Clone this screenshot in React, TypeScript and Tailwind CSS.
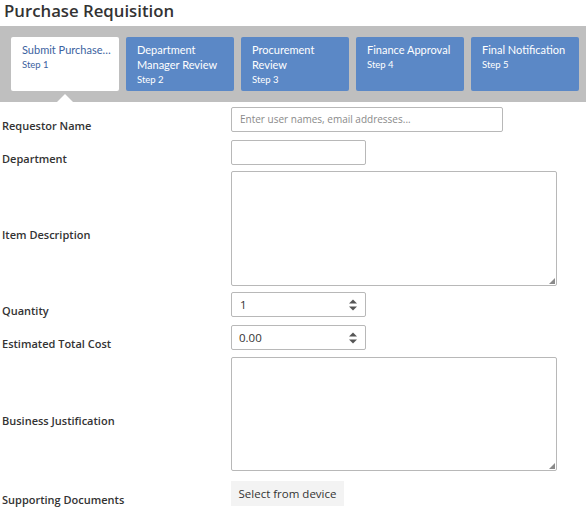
import React from "react";

const font = { fontFamily: '"Segoe UI", "Open Sans", "Noto Sans", sans-serif' };
const cardFont = { fontFamily: 'Lato, "Open Sans", sans-serif' };

type Step = { title: string; step: string; active?: boolean };

const steps: Step[] = [
  { title: "Submit Purchase Requisition", step: "Step 1", active: true },
  { title: "Department Manager Review", step: "Step 2" },
  { title: "Procurement Review", step: "Step 3" },
  { title: "Finance Approval", step: "Step 4" },
  { title: "Final Notification", step: "Step 5" },
];

function StepCard({ s }: { s: Step }) {
  if (s.active) {
    return (
      <div className="w-[108px] h-[54px] shrink-0 bg-white rounded-[2px] pl-[11px] pr-[8px] pt-[5px]" style={cardFont}>
        <div className="truncate text-[11px] leading-[15px] text-[#3b62a0]">Submit Purchase Requisition</div>
        <div className="text-[9.5px] leading-[16px] text-[#3b62a0]">{s.step}</div>
      </div>
    );
  }
  return (
    <div className="w-[108px] h-[54px] shrink-0 bg-[#5b88c6] rounded-[2px] pl-[11px] pr-[6px] pt-[5px] text-white" style={cardFont}>
      <div className="text-[11px] leading-[15px]">{s.title}</div>
      <div className="text-[9.5px] leading-[16px]">{s.step}</div>
    </div>
  );
}

function Label({ children }: { children: React.ReactNode }) {
  return (
    <div className="w-[231px] shrink-0 pl-[2px] text-[11px] font-semibold text-[#333] translate-y-[7px]">
      {children}
    </div>
  );
}

function Spinner() {
  return (
    <div className="absolute right-[8px] top-1/2 -translate-y-1/2 flex flex-col gap-[3px]">
      <div className="w-0 h-0 border-l-[4px] border-r-[4px] border-b-[4px] border-l-transparent border-r-transparent border-b-[#555]" />
      <div className="w-0 h-0 border-l-[4px] border-r-[4px] border-t-[4px] border-l-transparent border-r-transparent border-t-[#555]" />
    </div>
  );
}

function Grip() {
  return (
    <div className="absolute right-[1px] bottom-[1px] w-0 h-0 border-l-[6px] border-b-[6px] border-l-transparent border-b-[#8a8a8a]" />
  );
}

export default function App() {
  return (
    <div className="w-[586px] h-[515px] bg-white overflow-hidden" style={font}>
      <div className="h-[26px] pl-[4px] text-[16.75px] leading-[22px] font-semibold text-[#333]">Purchase Requisition</div>
      <div className="relative h-[76px] bg-[#bfbfbf] px-[11px] pt-[11px] flex gap-[7px]">
        {steps.map((s) => (
          <StepCard key={s.step} s={s} />
        ))}
        <div className="absolute left-[57px] bottom-0 w-0 h-0 border-l-[8px] border-r-[8px] border-b-[8px] border-l-transparent border-r-transparent border-b-white" />
      </div>

      <div className="flex flex-col pt-[5px]">
        <div className="flex items-center h-[25px]">
          <Label>Requestor Name</Label>
          <div className="w-[272px] h-[25px] border border-[#b8b8b8] rounded-[2px] px-[8px] flex items-center text-[10px] text-[#8a8a8a]">
            Enter user names, email addresses...
          </div>
        </div>

        <div className="flex items-center h-[25px] mt-[8px]">
          <Label>Department</Label>
          <div className="w-[135px] h-[25px] border border-[#b8b8b8] rounded-[2px]" />
        </div>

        <div className="flex items-center h-[115px] mt-[6px]">
          <Label>Item Description</Label>
          <div className="relative w-[326px] h-[115px] border border-[#b8b8b8] rounded-[2px]">
            <Grip />
          </div>
        </div>

        <div className="flex items-center h-[25px] mt-[6px]">
          <Label>Quantity</Label>
          <div className="relative w-[135px] h-[25px] border border-[#b8b8b8] rounded-[2px] px-[8px] flex items-center text-[11.5px] text-[#333]">
            1
            <Spinner />
          </div>
        </div>

        <div className="flex items-center h-[25px] mt-[8px]">
          <Label>Estimated Total Cost</Label>
          <div className="relative w-[135px] h-[25px] border border-[#b8b8b8] rounded-[2px] px-[7px] flex items-center text-[11.5px] text-[#333]">
            0.00
            <Spinner />
          </div>
        </div>

        <div className="flex items-center h-[114px] mt-[7px]">
          <Label>Business Justification</Label>
          <div className="relative w-[326px] h-[114px] border border-[#b8b8b8] rounded-[2px]">
            <Grip />
          </div>
        </div>

        <div className="flex items-center h-[25px] mt-[10px]">
          <Label>Supporting Documents</Label>
          <div className="h-[25px] w-[113px] bg-[#f3f3f3] flex items-center justify-center text-[11.5px] text-[#333]">
            Select from device
          </div>
        </div>
      </div>
    </div>
  );
}
